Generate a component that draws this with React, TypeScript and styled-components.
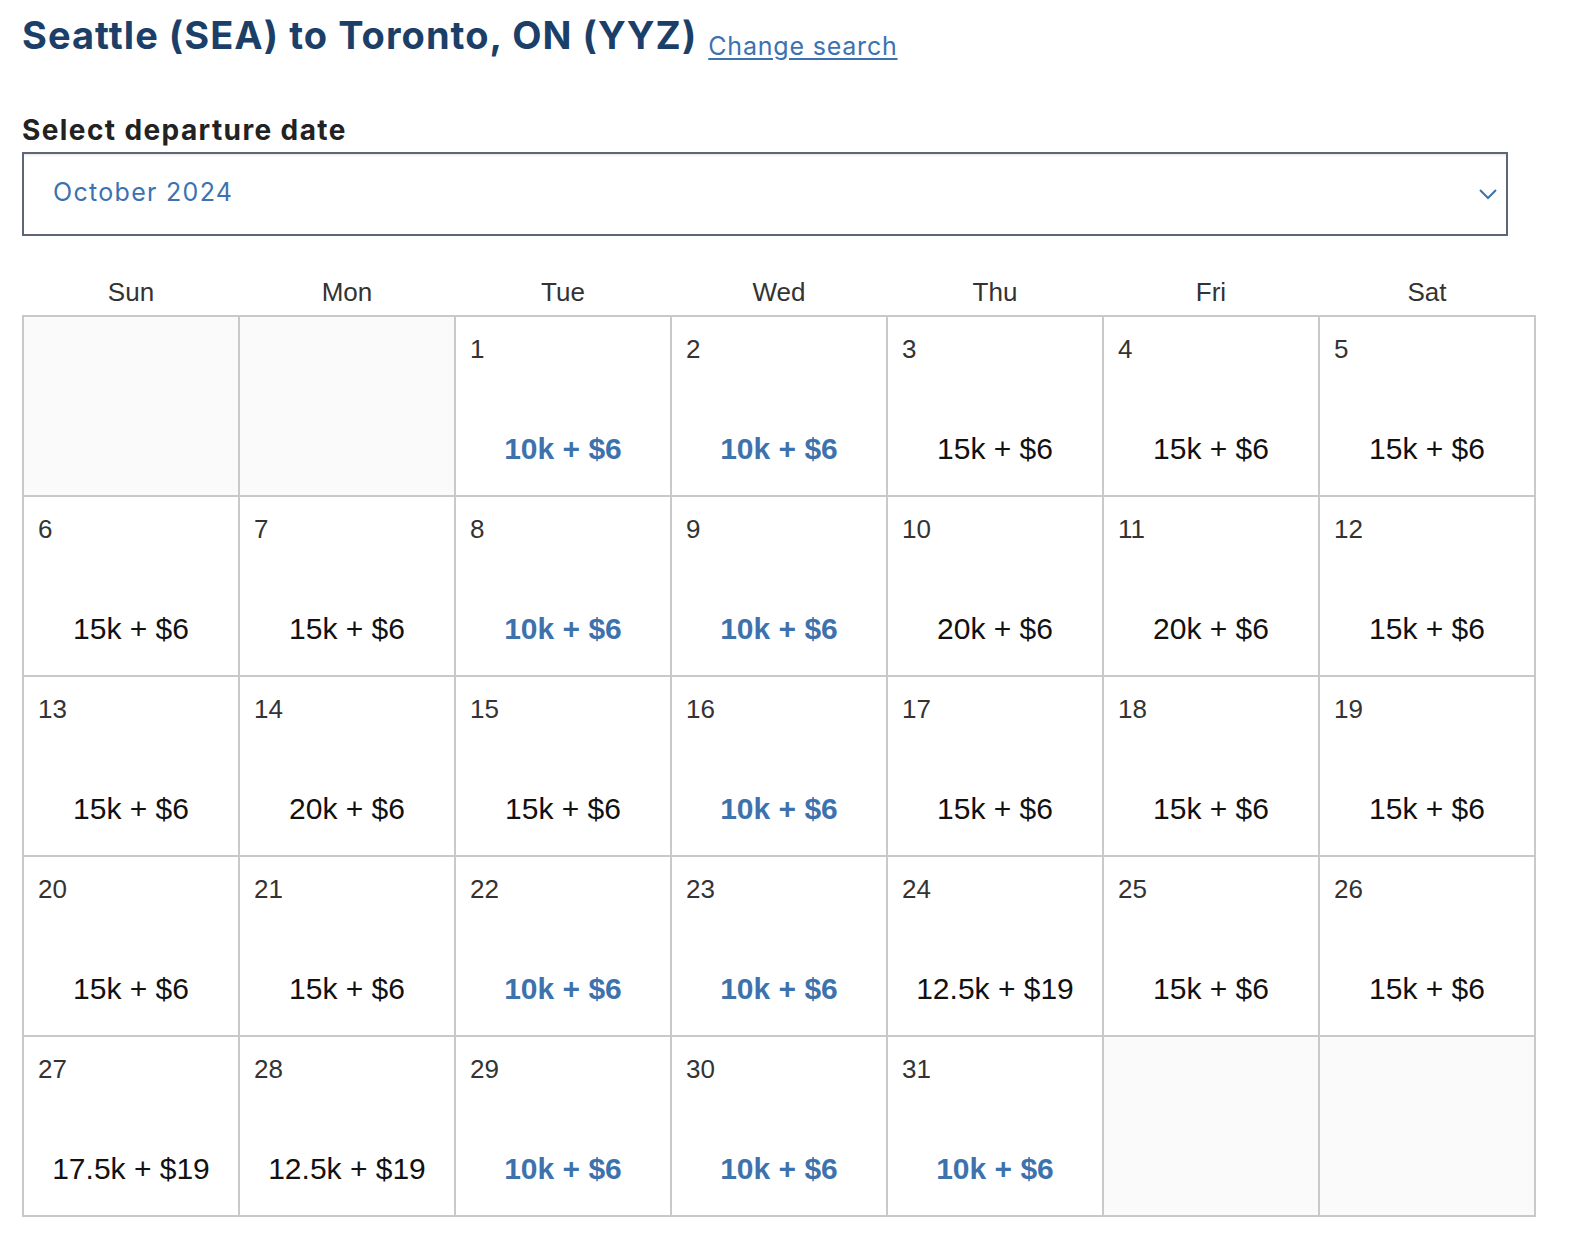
import React from "react";
import styled, { createGlobalStyle } from "styled-components";

const Global = createGlobalStyle`
  html, body { margin: 0; padding: 0; background: #fff; }
  body { font-family: "Liberation Sans", Arial, sans-serif; }
`;

const Page = styled.div`
  padding: 11px 0 0 22px;
  width: 1540px;
`;

const TitleRow = styled.div`
  display: flex;
  align-items: flex-end;
  gap: 11px;
  height: 48px;
`;

const Title = styled.h1`
  margin: 0;
  font-family: "Inter", "Lato", sans-serif;
  font-weight: 700;
  font-size: 38px;
  line-height: 48px;
  letter-spacing: 1.05px;
  color: #1b3f68;
`;

const ChangeLink = styled.a`
  font-family: "Inter", "Lato", sans-serif;
  font-size: 25px;
  line-height: 30px;
  margin-bottom: -2px;
  letter-spacing: 0.8px;
  color: #3c72b0;
  text-decoration: underline;
  text-underline-offset: 3px;
  cursor: pointer;
`;

const Label = styled.div`
  margin-top: 54px;
  font-family: "Inter", "Lato", sans-serif;
  font-weight: 700;
  font-size: 28px;
  line-height: 34px;
  letter-spacing: 1.4px;
  color: #222;
`;

const SelectBox = styled.div`
  margin-top: 5px;
  width: 1486px;
  height: 84px;
  box-sizing: border-box;
  border: 2px solid #5d6676;
  box-shadow: inset 0 3px 3px -2px rgba(0, 0, 0, 0.12);
  display: flex;
  align-items: center;
  justify-content: space-between;
  padding: 0 8px 0 29px;
`;

const SelectText = styled.span`
  font-family: "Inter", "Lato", sans-serif;
  font-size: 25px;
  letter-spacing: 1.3px;
  color: #3c72b0;
  margin-top: -4px;
`;

const DayHeaders = styled.div`
  display: grid;
  grid-template-columns: repeat(7, 216px);
  padding-left: 1px;
  margin-top: 41px;
`;

const DayHeader = styled.div`
  text-align: center;
  font-size: 26px;
  line-height: 30px;
  color: #333;
  padding-bottom: 8px;
`;

const Grid = styled.div`
  display: grid;
  grid-template-columns: repeat(7, 216px);
  grid-auto-rows: 180px;
  border-top: 2px solid #c9c9c9;
  border-left: 2px solid #c9c9c9;
  width: max-content;
`;

const Cell = styled.div<{ $empty?: boolean }>`
  box-sizing: border-box;
  border-right: 2px solid #c9c9c9;
  border-bottom: 2px solid #c9c9c9;
  background: ${(p) => (p.$empty ? "#fafafa" : "#fff")};
  display: flex;
  flex-direction: column;
  padding: 17px 0 0 14px;
`;

const DayNum = styled.div`
  font-size: 26px;
  line-height: 30px;
  color: #333;
`;

const Price = styled.div<{ $deal?: boolean }>`
  margin-top: 69px;
  margin-left: -14px;
  text-align: center;
  font-size: 30px;
  line-height: 32px;
  font-weight: ${(p) => (p.$deal ? 700 : 400)};
  color: ${(p) => (p.$deal ? "#3d72ad" : "#111")};
`;

const Chevron = () => (
  <svg width="20" height="12" viewBox="0 0 20 12" fill="none">
    <path d="M2 2 L10 10 L18 2" stroke="#3c72b0" strokeWidth="2" />
  </svg>
);

const prices: Record<number, string> = {
  1: "10k + $6", 2: "10k + $6", 3: "15k + $6", 4: "15k + $6", 5: "15k + $6",
  6: "15k + $6", 7: "15k + $6", 8: "10k + $6", 9: "10k + $6", 10: "20k + $6", 11: "20k + $6", 12: "15k + $6",
  13: "15k + $6", 14: "20k + $6", 15: "15k + $6", 16: "10k + $6", 17: "15k + $6", 18: "15k + $6", 19: "15k + $6",
  20: "15k + $6", 21: "15k + $6", 22: "10k + $6", 23: "10k + $6", 24: "12.5k + $19", 25: "15k + $6", 26: "15k + $6",
  27: "17.5k + $19", 28: "12.5k + $19", 29: "10k + $6", 30: "10k + $6", 31: "10k + $6",
};

const days = ["Sun", "Mon", "Tue", "Wed", "Thu", "Fri", "Sat"];

export default function App() {
  const cells: (number | null)[] = [null, null];
  for (let d = 1; d <= 31; d++) cells.push(d);
  while (cells.length % 7) cells.push(null);

  return (
    <Page>
      <Global />
      <TitleRow>
        <Title>Seattle (SEA) to Toronto, ON (YYZ)</Title>
        <ChangeLink>Change search</ChangeLink>
      </TitleRow>
      <Label>Select departure date</Label>
      <SelectBox>
        <SelectText>October 2024</SelectText>
        <Chevron />
      </SelectBox>
      <DayHeaders>
        {days.map((d) => (
          <DayHeader key={d}>{d}</DayHeader>
        ))}
      </DayHeaders>
      <Grid>
        {cells.map((d, i) =>
          d === null ? (
            <Cell key={i} $empty />
          ) : (
            <Cell key={i}>
              <DayNum>{d}</DayNum>
              <Price $deal={prices[d].startsWith("10k")}>{prices[d]}</Price>
            </Cell>
          )
        )}
      </Grid>
    </Page>
  );
}
